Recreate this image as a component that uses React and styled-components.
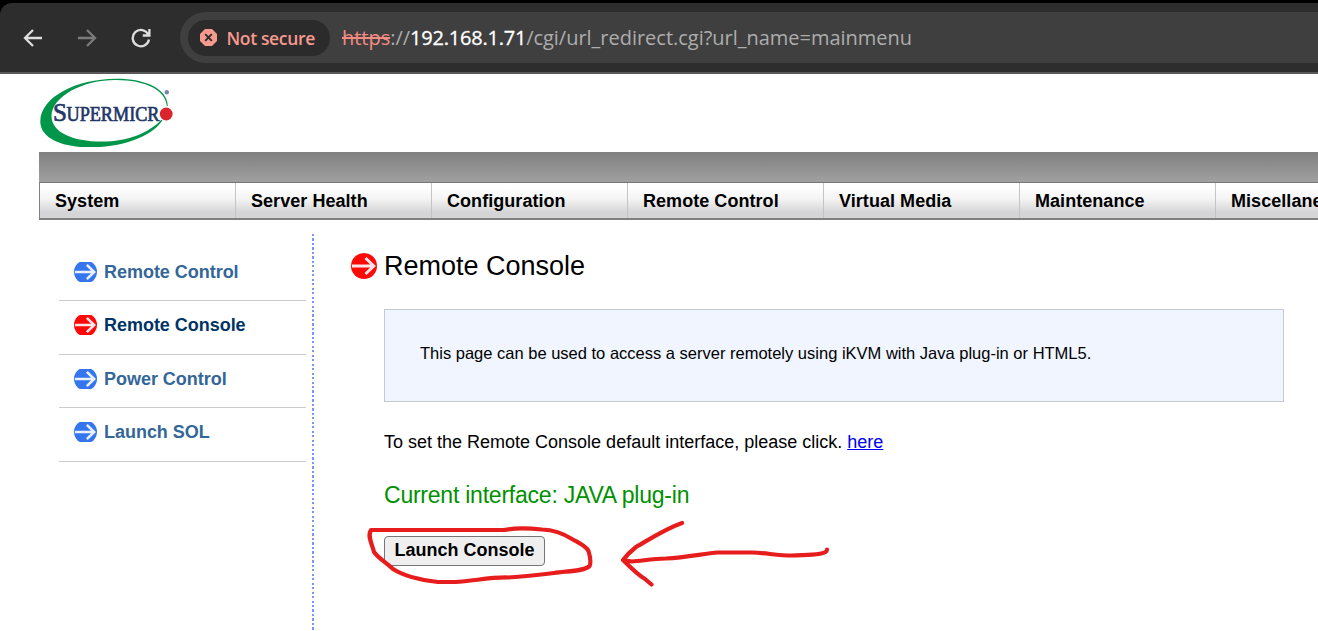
import React from "react";
import styled, { createGlobalStyle } from "styled-components";

const GlobalStyle = createGlobalStyle`
  html, body { margin: 0; background: #fff; overflow: hidden; }
  * { box-sizing: border-box; }
  svg { display: block; flex: none; }
`;

const Page = styled.div`
  position: relative;
  width: 1318px;
  height: 631px;
  overflow: hidden;
  background: #fff;
  color: #000;
  font-family: "Liberation Sans", Arial, sans-serif;
`;

const Browser = styled.header`
  height: 74px;
  padding-top: 3px;
  background: #000;
`;

const Toolbar = styled.div`
  display: flex;
  height: 71px;
  padding: 9px 0 0 23px;
  border-bottom: 2px solid #5a5a5a;
  border-top-left-radius: 12px;
  background: #2d2d2d;
`;

const NavIcons = styled.div`
  display: flex;
  align-items: center;
  gap: 34px;
  width: 157px;
  height: 51px;
`;

const Omnibox = styled.div`
  flex: 1;
  display: flex;
  align-items: center;
  height: 51px;
  padding-left: 8px;
  border-radius: 26px 0 0 26px;
  background: #3f3f3f;
  font-family: "Open Sans", "Noto Sans", sans-serif;
`;

const SecurityChip = styled.div`
  display: flex;
  align-items: center;
  gap: 9.5px;
  width: 142px;
  height: 36px;
  padding-left: 12px;
  margin-right: 12px;
  border-radius: 18px;
  background: #2b2b2b;
  color: #f6998f;
  font-size: 17.5px;
  font-weight: 600;
  letter-spacing: -0.35px;
  white-space: nowrap;
`;

const Url = styled.div`
  font-size: 20px;
  letter-spacing: -0.02px;
  color: #adadad;
  white-space: nowrap;
`;

const Scheme = styled.span`
  color: #f28b82;
  text-decoration: line-through;
`;

const Host = styled.span`
  color: #fff;
  letter-spacing: -0.22px;
  -webkit-text-stroke: 0.3px #fff;
`;

const Brand = styled.div`
  height: 78px;
  padding: 4px 0 0 39px;
`;

const Menu = styled.nav`
  margin-left: 39px;
  border-left: 1px solid #808080;
`;

const MenuBand = styled.div`
  height: 31px;
  margin-left: -1px;
  border-bottom: 1px solid #777;
  background: linear-gradient(#808080, #a0a0a0);
`;

const MenuRow = styled.div`
  display: flex;
  width: 1372px;
  height: 37px;
  border-bottom: 2px solid #808080;
  background: linear-gradient(#fff 10%, #f4f4f4 45%, #d4d4d6 85%, #d6d6d8);
`;

const MenuItem = styled.div`
  width: 196px;
  padding-left: 15px;
  border-right: 1px solid #c4c4c4;
  font-size: 18px;
  font-weight: 700;
  line-height: 36px;
  letter-spacing: 0.05px;
  white-space: nowrap;
`;

const Body = styled.div`
  display: flex;
  padding: 14px 0 0 59px;
`;

const Sidebar = styled.aside`
  width: 247px;
  padding-top: 13.5px;
`;

const SideItem = styled.div`
  display: flex;
  align-items: center;
  gap: 7px;
  height: 53.5px;
  padding: 0 0 4px 15px;
  border-bottom: 1px solid #ccc;
  color: ${(p) => (p.$active ? "#003366" : "#336699")};
  font-size: 18px;
  font-weight: 700;
  letter-spacing: -0.03px;
`;

const SideLabel = styled.span`
  padding-top: 0.8px;
`;

const Divider = styled.div`
  width: 2px;
  height: 400px;
  margin-left: 6px;
  background: repeating-linear-gradient(#7a96f9 0 2.2px, #fff 2.2px 4.47px);
`;

const Main = styled.main`
  width: 970px;
  padding: 15px 0 0 37px;
`;

const Title = styled.h1`
  display: flex;
  align-items: center;
  gap: 7px;
  height: 34px;
  margin: 0 0 26px;
  font-size: 27px;
  font-weight: 400;
`;

const Content = styled.div`
  padding-left: 33px;
`;

const Notice = styled.div`
  width: 900px;
  height: 93px;
  padding-left: 35px;
  border: 1px solid #c6c9cf;
  background: #f0f5ff;
  font-size: 16.5px;
  line-height: 86px;
`;

const Hint = styled.p`
  margin: 29px 0 0;
  font-size: 18px;
  line-height: 22px;
`;

const Link = styled.a`
  color: #0000ee;
  text-decoration: underline;
`;

const Status = styled.p`
  margin: 28px 0 0;
  color: #009100;
  font-size: 23px;
  letter-spacing: -0.23px;
  line-height: 28px;
`;

const LaunchButton = styled.button`
  display: block;
  width: 161px;
  height: 30px;
  margin-top: 27px;
  padding: 0 0 2px;
  border: 1px solid #767676;
  border-radius: 4px;
  background: #efefef;
  color: #000;
  font: 700 18px "Liberation Sans", Arial, sans-serif;
  white-space: nowrap;
`;

const Annotation = styled.svg`
  position: absolute;
  left: 360px;
  top: 510px;
  pointer-events: none;
`;

function BackIcon({ color, flip }) {
  return (
    <svg width="20" height="20" viewBox="0 0 20 20" fill="none" stroke={color} strokeWidth="2.3">
      <path d={flip ? "M1 10H18M10 2L18 10L10 18" : "M19 10H2M10 2L2 10L10 18"} />
    </svg>
  );
}

function ReloadIcon() {
  return (
    <svg width="20" height="20" viewBox="0 0 20 20" fill="none" stroke="#dedede" strokeWidth="2.3">
      <path d="M17.3 6.5A8.2 8.2 0 1 0 18 11.5M18.4 1V7.5H11.8" />
    </svg>
  );
}

function InsecureIcon() {
  return (
    <svg width="17" height="17" viewBox="0 0 17 17">
      <path d="M5 0H12L17 5V12L12 17H5L0 12V5Z" fill="#f6998f" />
      <path d="M5.2 5.2L11.8 11.8M11.8 5.2L5.2 11.8" stroke="#2b2b2b" strokeWidth="1.9" />
    </svg>
  );
}

function ArrowBadge({ color, width, height }) {
  return (
    <svg width={width} height={height} viewBox="0 0 26 26" preserveAspectRatio="xMidYMid slice">
      <circle cx="13" cy="13" r="13" fill={color} />
      <path d="M1 13H22M14.5 5L22.8 13L14.5 21" fill="none" stroke="#fff" strokeOpacity="0.9" strokeWidth="2.9" />
    </svg>
  );
}

function Logo() {
  return (
    <svg width="140" height="69" viewBox="39 78 140 69">
      <path
        fillRule="evenodd"
        fill="#00964a"
        d="M167.8 106C167.5 89 146 78.7 116 78.8C76 79 41 97 40.3 121C40 138 61 147.5 91 147.4C124 147 153 136 162.5 120L161 120C149 133 127 141.5 102 141.6C72 141.6 51.5 132 51.5 116C52 96 83 79.8 116 79.9C145 80 166 90 166.8 106Z"
      />
      <text x="53" y="120.6" fill="#1f3768" stroke="#1f3768" strokeWidth="0.7" fontFamily="Liberation Serif, serif" fontSize="25">S</text>
      <text x="66.5" y="120.6" fill="#1f3768" stroke="#1f3768" strokeWidth="0.7" fontFamily="Liberation Serif, serif" fontSize="20.5" textLength="93" lengthAdjust="spacingAndGlyphs">UPERMICR</text>
      <circle cx="166.2" cy="114" r="6.4" fill="#d9252b" />
      <circle cx="166.8" cy="92.2" r="2.2" fill="#7787a5" />
    </svg>
  );
}

const menuItems = ["System", "Server Health", "Configuration", "Remote Control", "Virtual Media", "Maintenance", "Miscellaneous"];
const sideItems = ["Remote Control", "Remote Console", "Power Control", "Launch SOL"];

export default function App() {
  return (
    <Page>
      <GlobalStyle />
      <Browser>
        <Toolbar>
          <NavIcons>
            <BackIcon color="#dedede" />
            <BackIcon color="#7b7b7b" flip />
            <ReloadIcon />
          </NavIcons>
          <Omnibox>
            <SecurityChip>
              <InsecureIcon />
              Not secure
            </SecurityChip>
            <Url>
              <Scheme>https</Scheme>://<Host>192.168.1.71</Host>/cgi/url_redirect.cgi?url_name=mainmenu
            </Url>
          </Omnibox>
        </Toolbar>
      </Browser>
      <Brand>
        <Logo />
      </Brand>
      <Menu>
        <MenuBand />
        <MenuRow>
          {menuItems.map((label) => (
            <MenuItem key={label}>{label}</MenuItem>
          ))}
        </MenuRow>
      </Menu>
      <Body>
        <Sidebar>
          {sideItems.map((label) => {
            const active = label === "Remote Console";
            return (
              <SideItem key={label} $active={active}>
                <ArrowBadge color={active ? "#ff0808" : "#3575ee"} width={23} height={20} />
                <SideLabel>{label}</SideLabel>
              </SideItem>
            );
          })}
        </Sidebar>
        <Divider />
        <Main>
          <Title>
            <ArrowBadge color="#ff0808" width={26} height={26} />
            Remote Console
          </Title>
          <Content>
            <Notice>This page can be used to access a server remotely using iKVM with Java plug-in or HTML5.</Notice>
            <Hint>
              To set the Remote Console default interface, please click. <Link href="#">here</Link>
            </Hint>
            <Status>Current interface: JAVA plug-in</Status>
            <LaunchButton>Launch Console</LaunchButton>
          </Content>
        </Main>
      </Body>
      <Annotation width="480" height="90" viewBox="360 510 480 90" fill="none" stroke="#e71d1d" strokeWidth="4.2" strokeLinecap="round" strokeLinejoin="round">
        <path d="M371 530H504C514 528 532 528.5 542 529.5C554 530 564 534 572 539C580 543.5 586 546 588.5 551C590 556 591.5 562 589.5 566C585 571 568 571 554 573C538 575 524 576.5 508 577.5C490 577 474 581 455 582H438C420 580 404 576 393 569C387 563 378 558 374 552C372 544 367 536 371 530Z" />
        <path d="M682 523C665 529 650 539 636 547C631 551 626 556 623 560L632 561.5C642 561 652 558.5 666 558.5C687 557.5 704 553.5 718 552.5H752C766 553 778 555.5 792 555.5C804 554.5 827 556 827 549.5M623 560C631 568 638 575 645 579L651.5 584.5" />
      </Annotation>
    </Page>
  );
}
